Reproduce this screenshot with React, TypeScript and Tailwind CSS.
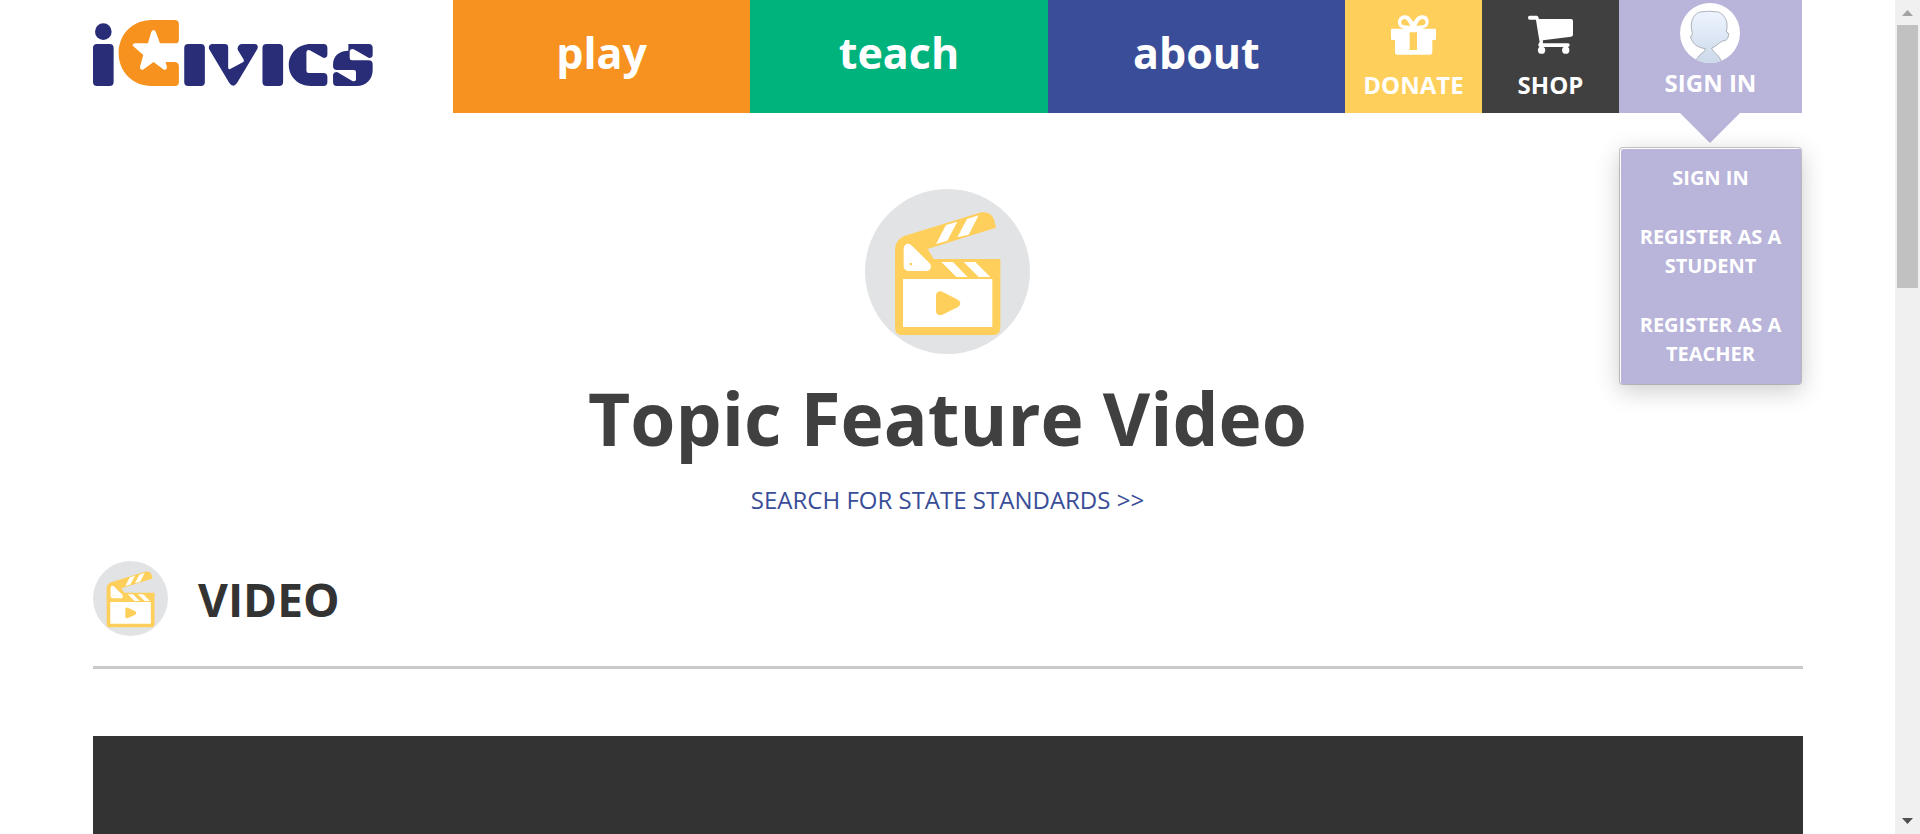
import React from "react";

function Logo() {
  return (
    <svg viewBox="39 60 841 198" className="h-[66px] w-[280px]" role="img" aria-label="iCivics">
      <g fill="#292d78">
        <circle cx="70" cy="95" r="25" />
        <rect x="39" y="132" width="62" height="126" rx="12" />
        <rect x="313" y="132" width="62" height="126" rx="12" />
        <rect x="548" y="132" width="62" height="126" rx="12" />
        <path d="M396 132h38q11 0 11 10v61q0 6 6 4l38-20q5-3 2-9l-17-28q-3-10 5-16q3-2 7-2h38q13 1 9 14L472 248q-12 18-24 0L388 148q-4-13 8-16z" />
        <path d="M693 132h38q12 0 12 12v20q-1 10-11 10l-42-23q-9-3-10 6v55q0 7 7 7h44q12 0 12 12v15q0 12-12 12h-38c-38 0-66-28-66-63s28-63 66-63z" />
        <path d="M806 132h61q12 0 12 12v20q0 10-11 10l-46-26q-10-3-12 6v20q0 7 7 7h50q12 0 12 12v17c0 27-18 48-48 48h-60q-11 0-11-11v-22q1-9 12-9l46 27q9 2 11-4v-23q0-6-7-6h-50q-12 0-12-12v-5c0-24 18-41 46-41z" />
      </g>
      <path
        fill="#f7921e"
        d="M215 60h69q13 0 13 13v46q0 11-11 11h-46l-12-34q-7-12-14 0l-10 34h-39q-10 2-5 9l30 26-10 36q0 10 9 8l32-23 31 23q9 2 9-8l-4-15h26q14 0 14 14v45q0 13-12 13h-70c-57 0-99-43-99-99s42-99 99-99z"
      />
    </svg>
  );
}

function Clapper({ className }: { className: string }) {
  return (
    <svg viewBox="45 27 495 495" className={className} aria-hidden="true">
      <circle cx="292.500" cy="274.500" r="247.500" fill="#e1e3e5" />
      <path
        fill="#ffcf5c"
        d="M165 167L394 97q28-4 38 21l6 25-205 64 18 30h200v206q0 22-22 22H157q-22 0-22-22V208q1-30 30-41z"
      />
      <g fill="#fff">
        <path d="M159 297h268v144H159z" />
        <path d="M288 135l34-10-30 57-34 10zM351 117l35-11-30 58-34 8z" />
        <path d="M274 246h35l44 45h-34zM341 246h35l45 45h-35z" />
        <path d="M186 197l53 53q8 11 0 19-4 4-10 4h-54q-14-1-14-15v-53q2-15 15-14 5 1 10 6z" />
      </g>
      <path fill="#ffcf5c" d="M277 335l47 24q14 11 0 22l-47 23q-15 5-19-9v-51q5-14 19-9z" />
      <path fill="#ffcf5c" d="M179 249h7v7h-7z" />
    </svg>
  );
}

function GiftIcon() {
  return (
    <svg viewBox="153 44 135 118" className="h-10 w-[45px]" aria-hidden="true">
      <path
        fill="#fff"
        fillRule="evenodd"
        d="M156 84h40c-32 0-26-40-2-40 12 0 18 8 26 20 8-12 14-20 28-20 24 0 26 40-4 40h41q3 0 3 3v27q0 4-4 4h-7v36q0 8-8 8H172q-7 0-7-8v-36h-8q-4 0-4-4V87q0-3 3-3zm38-29c-14 0-13 18-1 19l18 2c-4-8-10-21-17-21zm52 0c-7 0-13 13-17 21l18-2c13-1 13-19-1-19zM209 95v53h22V95z"
      />
    </svg>
  );
}

function CartIcon() {
  return (
    <svg viewBox="564 44 136 116" className="h-10 w-[45px]" aria-hidden="true">
      <g fill="#fff">
        <path d="M569 44h22q5 1 6 10h97q6 0 6 6v41q0 5-6 6l-85 11v9h76q5 0 5 5t-5 6h-85q-6 0-5-7l4-8-11-67h-19q-5 0-5-6t5-6z" />
        <circle cx="605" cy="148" r="11" />
        <circle cx="678" cy="148" r="11" />
      </g>
    </svg>
  );
}

function Avatar() {
  return (
    <svg viewBox="1023 9 180 180" className="size-[60px]" aria-hidden="true">
      <defs>
        <linearGradient id="skin" x1="0" y1="0" x2="0" y2="1">
          <stop offset="0" stopColor="#eef4ff" />
          <stop offset="1" stopColor="#c9d7e8" />
        </linearGradient>
        <clipPath id="disc">
          <circle cx="1113" cy="99" r="90" />
        </clipPath>
      </defs>
      <circle cx="1113" cy="99" r="90" fill="#fff" />
      <path
        clipPath="url(#disc)"
        fill="url(#skin)"
        stroke="#8d9399"
        strokeWidth="2"
        d="M1064 200Q1074 170 1088 160Q1101 153 1099 146C1082 144 1066 136 1061 124C1057 119 1053 110 1056 107Q1061 107 1060 100C1051 66 1062 44 1082 36Q1110 31 1138 36C1160 46 1169 66 1162 96Q1170 97 1169 106Q1167 118 1160 121Q1149 122 1141 129Q1130 140 1118 144Q1119 152 1130 160Q1146 174 1154 200z"
      />
    </svg>
  );
}

const sections = [
  { name: "play", color: "bg-[#f79220]" },
  { name: "teach", color: "bg-[#00b37d]" },
  { name: "about", color: "bg-[#394d98]" },
];

const accountLinks = ["SIGN IN", "REGISTER AS A STUDENT", "REGISTER AS A TEACHER"];

function Header() {
  return (
    <header className="flex h-[113px] pr-px">
      <a href="#home" className="w-[360px] shrink-0 pt-5">
        <Logo />
      </a>
      <nav className="flex flex-1 font-bold text-white">
        {sections.map((s) => (
          <a
            key={s.name}
            href={"#" + s.name}
            className={"flex flex-1 items-center justify-center pb-2 text-[43px] leading-none " + s.color}
          >
            {s.name}
          </a>
        ))}
        <a href="#donate" className="flex w-[137px] flex-col items-center gap-3.5 bg-[#ffcf5c] pt-[15px] text-2xl leading-8">
          <GiftIcon />
          DONATE
        </a>
        <a href="#shop" className="flex w-[137px] flex-col items-center gap-3.5 bg-[#404040] pt-[15px] text-2xl leading-8">
          <CartIcon />
          SHOP
        </a>
        <div className="relative w-[183px] bg-[#b9b4da]">
          <button type="button" className="flex w-full flex-col items-center gap-1 pt-[3px] text-2xl leading-8">
            <Avatar />
            SIGN IN
          </button>
          <svg viewBox="0 0 60 30" className="absolute top-full left-1/2 h-[30px] w-[60px] -translate-x-1/2" aria-hidden="true">
            <path d="M0 0h60L30 30z" fill="#b9b4da" />
          </svg>
          <ul className="absolute top-[147px] left-0 flex w-full flex-col rounded border border-black/20 bg-[#b9b4da] bg-clip-padding pb-px text-center text-xl leading-[29px] shadow-[0_6px_24px_rgba(0,0,0,0.2),inset_1px_1px_0_#fff]">
            {accountLinks.map((label) => (
              <li key={label}>
                <a href="#account" className="block px-3 py-[15px]">
                  {label}
                </a>
              </li>
            ))}
          </ul>
        </div>
      </nav>
    </header>
  );
}

function ScrollTrack() {
  return (
    <div className="flex w-[25px] shrink-0 flex-col items-center bg-[#f0f0f0]" aria-hidden="true">
      <svg viewBox="0 0 25 25" className="size-[25px]">
        <path d="M7 16h11l-5.500-6z" fill="#a3a3a3" />
      </svg>
      <div className="h-[263px] w-[21px] bg-[#c1c1c1]" />
      <svg viewBox="0 0 25 25" className="mt-auto size-[25px]">
        <path d="M7 9h11l-5.500 6z" fill="#505050" />
      </svg>
    </div>
  );
}

export default function App() {
  return (
    <div className="flex h-screen overflow-hidden bg-white font-['Open_Sans','Noto_Sans',sans-serif]">
      <div className="flex flex-1 flex-col pr-[92px] pl-[93px]">
        <Header />
        <main className="flex flex-1 flex-col">
          <div className="flex flex-col items-center pt-[76px] pr-px">
            <Clapper className="size-[165px]" />
            <h1 className="mt-5 text-[73px] leading-[88px] font-bold text-[#404040]">Topic Feature Video</h1>
            <a href="#standards" className="mt-5 text-2xl leading-9 text-[#394d98]">
              SEARCH FOR STATE STANDARDS &gt;&gt;
            </a>
          </div>
          <section className="mt-[43px] flex flex-1 flex-col">
            <div className="flex items-center gap-[30px] border-b-[3px] border-[#c8c9ca] pb-[30px]">
              <Clapper className="size-[75px]" />
              <h2 className="text-[46px] leading-[60px] font-bold text-[#333333]">VIDEO</h2>
            </div>
            <div className="mt-[67px] min-h-24 flex-1 bg-[#333333]" />
          </section>
        </main>
      </div>
      <ScrollTrack />
    </div>
  );
}
